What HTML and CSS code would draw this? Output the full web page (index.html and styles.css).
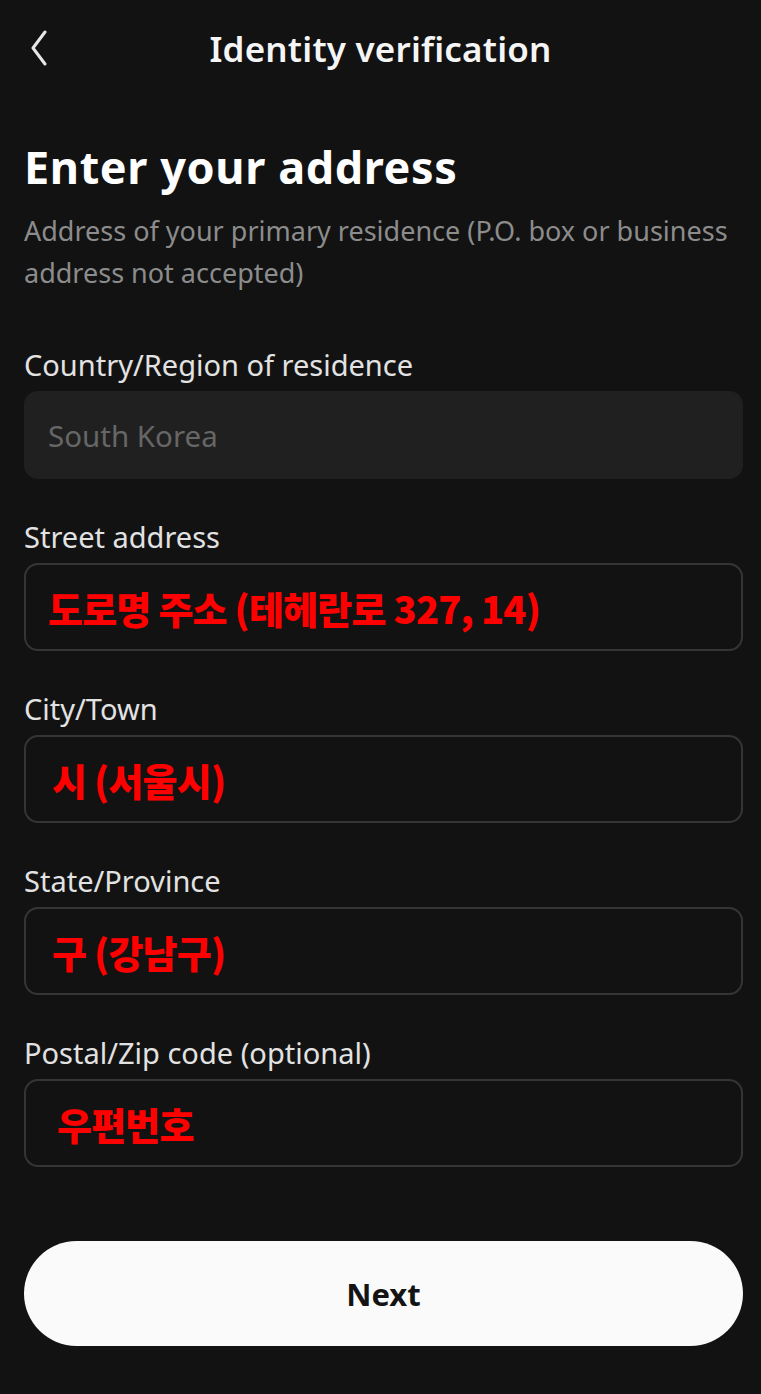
FILE: index.html
```html
<!DOCTYPE html>
<html lang="en">
<head>
<meta charset="utf-8">
<title>Identity verification</title>
<link rel="stylesheet" href="styles.css">
</head>
<body>
<div class="screen">
  <header class="topbar">
    <button class="back" aria-label="Back">
      <svg width="18" height="36" viewBox="0 0 18 36"><path d="M15 2 L3 18 L15 34" fill="none" stroke="#e6e6e6" stroke-width="3" stroke-linecap="round" stroke-linejoin="round"/></svg>
    </button>
    <h2 class="topbar-title">Identity verification</h2>
  </header>

  <main class="content">
    <h1 class="heading">Enter your address</h1>
    <p class="sub">Address of your primary residence (P.O. box or business address not accepted)</p>

    <div class="form">
      <div class="group">
        <div class="label">Country/Region of residence</div>
        <div class="field field-disabled"><span class="placeholder">South Korea</span></div>
      </div>
      <div class="group">
        <div class="label">Street address</div>
        <div class="field"><span class="note note-street">도로명 주소 (테헤란로 327, 14)</span></div>
      </div>
      <div class="group">
        <div class="label">City/Town</div>
        <div class="field"><span class="note note-city">시 (서울시)</span></div>
      </div>
      <div class="group">
        <div class="label">State/Province</div>
        <div class="field"><span class="note note-city">구 (강남구)</span></div>
      </div>
      <div class="group">
        <div class="label">Postal/Zip code (optional)</div>
        <div class="field"><span class="note note-zip">우편번호</span></div>
      </div>
    </div>

    <button class="next">Next</button>
  </main>
</div>
</body>
</html>
```

FILE: styles.css
```css
* { box-sizing: border-box; }
html, body {
  margin: 0;
  padding: 0;
  background: #121212;
}
body {
  font-family: "Noto Sans", "Open Sans", sans-serif;
  color: #f2f2f2;
  width: 761px;
  min-height: 1394px;
}
.screen {
  display: flex;
  flex-direction: column;
}
.topbar {
  height: 96px;
  display: flex;
  align-items: center;
  justify-content: center;
  position: relative;
}
.back {
  position: absolute;
  left: 30px;
  top: 30px;
  padding: 0;
  border: 0;
  background: none;
  display: flex;
}
.topbar-title {
  margin: 0;
  font-size: 35px;
  font-weight: 600;
  color: #f5f5f5;
  letter-spacing: 0.2px;
}
.content {
  padding: 0 18px 0 24px;
  display: flex;
  flex-direction: column;
}
.heading {
  margin: 43px 0 0;
  font-size: 45px;
  line-height: 56px;
  font-weight: 700;
  color: #ffffff;
  letter-spacing: 0.6px;
}
.sub {
  margin: 15px 0 0;
  font-size: 27px;
  line-height: 42px;
  color: #8c8c8c;
}
.form {
  margin-top: 53px;
  display: flex;
  flex-direction: column;
  gap: 40px;
}
.group {
  display: flex;
  flex-direction: column;
  gap: 8px;
}
.label {
  font-size: 29px;
  line-height: 36px;
  color: #e2e2e2;
}
.field {
  height: 88px;
  border-radius: 14px;
  border: 2px solid #353535;
  display: flex;
  align-items: center;
  padding-left: 22px;
}
.field-disabled {
  background: #202020;
  border-color: #202020;
}
.placeholder {
  font-size: 29.5px;
  color: #666666;
}
.note {
  font-family: "Noto Sans CJK KR", "Noto Sans", sans-serif;
  font-weight: 900;
  font-size: 38px;
  color: #ff0000;
  letter-spacing: -0.8px;
}
.note-city { margin-left: 4px; }
.note-zip { margin-left: 9px; }
.next {
  margin-top: 74px;
  height: 105px;
  border: 0;
  border-radius: 53px;
  background: #fafafa;
  font-family: "Noto Sans", sans-serif;
  font-size: 31px;
  font-weight: 700;
  color: #141414;
}
```
